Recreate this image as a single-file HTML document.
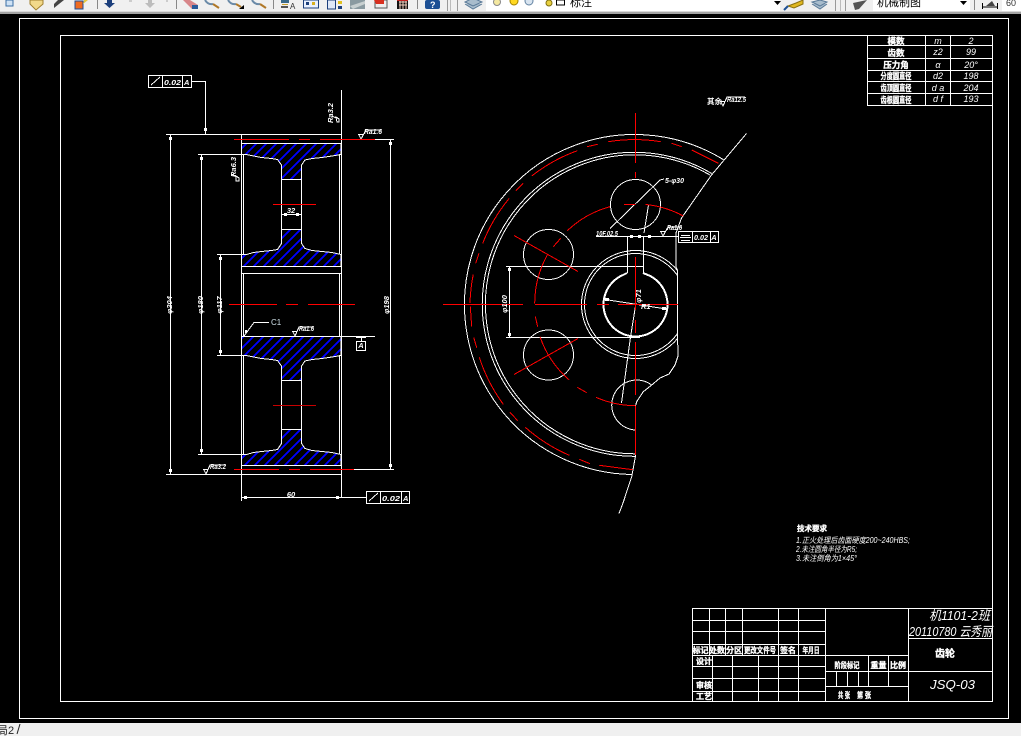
<!DOCTYPE html>
<html><head><meta charset="utf-8"><style>
html,body{margin:0;padding:0;width:1021px;height:736px;overflow:hidden;background:#000}
svg{display:block}
text{font-family:"Liberation Sans","Noto Sans CJK SC",sans-serif;fill:#fff}
.i{font-style:italic}
.c{text-anchor:middle}
.t{font-size:8.500px;font-weight:700;stroke:#fff;stroke-width:.35px}
.s{font-size:7.500px;font-weight:700}
.n{font-size:9px;font-style:italic}
</style></head><body>
<svg width="1021" height="736" viewBox="0 0 1021 736" xmlns="http://www.w3.org/2000/svg">
<defs>
<clipPath id="sec">
<path d="M241.500 143.500H341V154.500L332 156 322 157.500 312 158.500 305 160 301.500 165V179.500H281.500V165L277.500 159.500 271.500 158.500 261.500 157.500 253.500 156 246.500 154.500H241.500Z"/>
<path d="M241.500 266.500H341V254.500L332 252.500 322 251.500 312 250.500 305 248.500 301.500 243.500V229.500H281.500V243.500L277.500 249.500 271.500 250.500 261.500 251.500 253.500 252.500 246.500 254.500H241.500Z"/>
<path d="M241.500 336.500H341V355.500L332 357 322 358.500 312 359.500 305 361 301.500 366V380.500H281.500V366L277.500 360.500 271.500 359.500 261.500 358.500 253.500 357 246.500 355.500H241.500Z"/>
<path d="M241.500 465.500H341V454.500L332 452.500 322 451.500 312 450.500 305 448.500 301.500 443.500V429.500H281.500V443.500L277.500 449.500 271.500 450.500 261.500 451.500 253.500 452.500 246.500 454.500H241.500Z"/>
</clipPath>
<clipPath id="cl"><rect x="400" y="100" width="277" height="400"/></clipPath>
</defs>
<rect width="1021" height="736" fill="#000"/>
<!-- toolbar -->
<rect width="1021" height="11" fill="#f0f0f0"/>
<rect y="11" width="1021" height="1" fill="#d8d8d8"/>
<rect y="12" width="1021" height="2" fill="#a4a4a4"/>
<rect x="6" y="0" width="7" height="6" fill="#cfe2f5" stroke="#3a6ea5"/>
<path d="M30 0V4L36 10 43 4V0Z" fill="#f2d98a" stroke="#a08030"/>
<path d="M54 8L64 0H58L54 4Z" fill="#444"/>
<rect x="75" y="1" width="8" height="8" fill="#ee6a20" stroke="#1f4f9a"/>
<path d="M83 4L88 0H84Z" fill="#e8c840"/>
<rect x="97" y="0" width="1" height="9" fill="#888"/>
<path d="M107 0H112V3H115L109.500 8 104 3H107Z" fill="#1c3f7c"/>
<rect x="129" y="0" width="3" height="2" fill="#ccc"/>
<path d="M148 0H152V3H155L150 8 145 3H148Z" fill="#bdbdbd"/>
<rect x="166" y="0" width="2" height="2" fill="#ccc"/>
<rect x="176" y="0" width="1" height="9" fill="#888"/>
<path d="M183 0H190L198 5V9H192Z" fill="#d8868a"/><rect x="192" y="5" width="6" height="4" fill="#2a5a9a"/>
<path d="M205 0Q208 5 213 4" stroke="#6a8aa8" stroke-width="2" fill="none"/><path d="M213 4L219 8" stroke="#b07828" stroke-width="2"/>
<path d="M228 0Q231 5 236 4" stroke="#6a8aa8" stroke-width="2" fill="none"/><path d="M236 4L241 7" stroke="#b07828" stroke-width="2"/><path d="M239 9L244 9 244 5Z" fill="#000"/>
<path d="M252 0Q255 5 260 4" stroke="#6a8aa8" stroke-width="2" fill="none"/><path d="M260 4L266 8" stroke="#b07828" stroke-width="2"/>
<rect x="273" y="0" width="1" height="9" fill="#888"/>
<rect x="281" y="0" width="8" height="3" fill="#3a6a8a"/><rect x="282" y="4" width="6" height="1" fill="#c8a030"/><rect x="281" y="6" width="7" height="2" fill="#555"/>
<text x="290" y="9" style="font-size:8px;fill:#333">A</text>
<rect x="303.500" y="0" width="15" height="8" fill="#e8f0ff" stroke="#1c3f7c"/><rect x="306" y="2" width="3" height="3" fill="#1c3f7c"/><rect x="312" y="2" width="3" height="3" fill="#d8b020"/>
<rect x="327.500" y="0" width="8" height="9" fill="#dfe8f8" stroke="#1c3f7c"/><rect x="338" y="1" width="4" height="3" fill="#e0c020"/><rect x="338" y="6" width="4" height="3" fill="#1c3f7c"/>
<rect x="350" y="0" width="15" height="9" fill="#8a9aa0"/><path d="M350 6L365 1V4L353 9Z" fill="#c8d0d0"/>
<rect x="375" y="0" width="12" height="8" fill="#eee" stroke="#555"/><path d="M374 0H384V4H376Z" fill="#d83020"/>
<rect x="397" y="0" width="11" height="9" fill="#111"/><path d="M399 2H407M399 5H407M400 0V9M403 0V9M406 0V9" stroke="#f4d0c0" stroke-width="1"/><rect x="397" y="0" width="11" height="1" fill="#c02020"/>
<rect x="417" y="0" width="1" height="9" fill="#888"/>
<rect x="425" y="0" width="15" height="9" rx="2" fill="#1c4f94"/><text x="430" y="8" style="font-size:9px;font-weight:700;fill:#fff">?</text>
<rect x="447" y="0" width="1" height="11" fill="#999"/><rect x="450" y="0" width="1" height="11" fill="#bbb"/><rect x="457" y="0" width="1" height="11" fill="#999"/>
<path d="M465 2L473 6 482 2 473 -2ZM465 4L473 9 482 4" fill="#a8bccc" stroke="#5a7a98"/>
<rect x="486" y="0" width="294" height="11" fill="#fff"/>
<circle cx="497" cy="2" r="3.500" fill="#f4e8a0" stroke="#888"/>
<circle cx="514" cy="1" r="4" fill="#ffd820" stroke="#a08000"/>
<circle cx="529" cy="1" r="4" fill="#d8e4f0" stroke="#6080a0"/>
<circle cx="549" cy="3" r="3" fill="#e8d040" stroke="#807010"/>
<rect x="556.500" y="0" width="8" height="5" fill="#fff" stroke="#000"/>
<text x="570" y="6" style="font-size:11px;fill:#000">标注</text>
<path d="M774 1H781L777.500 5Z" fill="#000"/>
<path d="M788 6L796 3 803 0V4L794 8Z" fill="#e0b820" stroke="#8a7010"/><path d="M784 10L788 6" stroke="#1c4f94" stroke-width="2"/>
<path d="M812 2L820 6 827 2 820 0ZM812 4L820 9 827 4" fill="#a8bccc" stroke="#5a7a98"/>
<rect x="835" y="0" width="1" height="11" fill="#999"/><rect x="840" y="0" width="1" height="11" fill="#bbb"/><rect x="845" y="0" width="1" height="11" fill="#999"/>
<path d="M853 3L867 0 859 9 855 10Z" fill="#555"/>
<rect x="873" y="0" width="97" height="11" fill="#fff"/>
<text x="877" y="6" style="font-size:11px;fill:#000">机械制图</text>
<path d="M960 1H967L963.500 5Z" fill="#000"/>
<rect x="974" y="0" width="1" height="10" fill="#888"/>
<path d="M982.500 3V9M997.500 3V9M983 7H997" stroke="#000" fill="none"/><path d="M986 6L992 1 995 6Z" fill="#444"/>
<rect x="1002" y="0" width="19" height="11" fill="#fff"/>
<text x="1006" y="6" style="font-size:9px;fill:#333">60</text>
<!-- bottom bar -->
<rect y="723" width="1021" height="13" fill="#f0f0f0"/>
<text x="-3" y="734" style="font-size:11px;fill:#222">局2</text>
<path d="M20 724L17 734" stroke="#222" fill="none"/>

<g shape-rendering="crispEdges">
<!-- frames -->
<rect x="19.500" y="18.500" width="989" height="700" fill="none" stroke="#fff"/>
<rect x="60.500" y="35.500" width="932" height="666" fill="none" stroke="#fff"/>

<!-- left view: hatch lines -->
<g clip-path="url(#sec)">
<path stroke="#0000ff" stroke-width="1.600" fill="none" d="M241 149L341 49M241 159L341 59M241 169L341 69M241 179L341 79M241 189L341 89M241 199L341 99M241 209L341 109M241 219L341 119M241 229L341 129M241 239L341 139M241 249L341 149M241 259L341 159M241 269L341 169M241 279L341 179M241 289L341 189M241 299L341 199M241 309L341 209M241 319L341 219M241 329L341 229M241 339L341 239M241 349L341 249M241 359L341 259M241 369L341 269M241 379L341 279M241 389L341 289M241 399L341 299M241 409L341 309M241 419L341 319M241 429L341 329M241 439L341 339M241 449L341 349M241 459L341 359M241 469L341 369M241 479L341 379M241 489L341 389M241 499L341 399M241 509L341 409M241 519L341 419M241 529L341 429M241 539L341 439M241 549L341 449M241 559L341 459M241 569L341 469"/>
</g>
<g stroke="#fff" fill="none">
<path d="M241.500 143.500H341V154.500L332 156 322 157.500 312 158.500 305 160 301.500 165V179.500H281.500V165L277.500 159.500 271.500 158.500 261.500 157.500 253.500 156 246.500 154.500H241.500Z"/>
<path d="M241.500 266.500H341V254.500L332 252.500 322 251.500 312 250.500 305 248.500 301.500 243.500V229.500H281.500V243.500L277.500 249.500 271.500 250.500 261.500 251.500 253.500 252.500 246.500 254.500H241.500Z"/>
<path d="M241.500 336.500H341V355.500L332 357 322 358.500 312 359.500 305 361 301.500 366V380.500H281.500V366L277.500 360.500 271.500 359.500 261.500 358.500 253.500 357 246.500 355.500H241.500Z"/>
<path d="M241.500 465.500H341V454.500L332 452.500 322 451.500 312 450.500 305 448.500 301.500 443.500V429.500H281.500V443.500L277.500 449.500 271.500 450.500 261.500 451.500 253.500 452.500 246.500 454.500H241.500Z"/>
<path d="M281.500 179V230M301.500 179V230M281.500 380V430M301.500 380V430"/>
<path d="M241.500 134V501M341.500 90V497"/>
<path d="M243.500 154V254M339.500 154V254M243.500 273V336M339.500 273V336M243.500 355V454M339.500 355V454"/>
<path d="M166 134.500H341M241 273.500H341M166 474.500H341"/>
<path d="M170.500 134V474M201.500 154V454M220.500 254V355M390.500 139V469"/>
<path d="M198 154.500H241M217 254.500H241M358 139.500H394M341 336.500H375M198 454.500H241M217 355.500H241M354 469.500H394"/>
<path d="M241 497.500H366M281 214.500H302"/>
<rect x="148.500" y="75.500" width="43" height="12"/><path d="M162.500 75V87M182.500 75V87M151 85L160 77"/>
<path d="M192 81.500H205.500V134"/>
<rect x="366.500" y="491.500" width="43" height="12"/><path d="M380.500 491V503M401.500 491V503M369 501L378 493"/>
<path d="M244 336L254 322.500H269"/>
<path d="M356 337.500H366M361.500 337V341"/><rect x="356.500" y="341.500" width="9" height="9"/>
<!-- roughness -->
<path d="M358 134.500H364M359 135L361 139 366 130H382"/>
<path d="M292 331.500H297M293 332L295 336 299 327H314"/>
<path d="M203 469.500H208M204 470L206 474 210 465H226"/>
<path d="M660 231.500H665M661 232L663 236 668 227H682"/>
<path d="M720 101.500H725M721 102L723 106 727 97H745"/>
<path d="M336 117L339 119 339 122 337 122ZM332 116L336 118"/>
<path d="M236 176L239 178 239 181 236 181ZM231 174L236 176"/>
</g>
<g fill="#fff">
<rect x="169" y="137" width="3" height="3"/><rect x="200" y="157" width="3" height="3"/><rect x="219" y="257" width="3" height="3"/><rect x="389" y="142" width="3" height="3"/><rect x="204" y="128" width="3" height="3"/>
<rect x="169" y="469" width="3" height="3"/><rect x="200" y="449" width="3" height="3"/><rect x="219" y="350" width="3" height="3"/><rect x="389" y="464" width="3" height="3"/><rect x="244" y="496" width="3" height="3"/><rect x="336" y="496" width="3" height="3"/>
<rect x="284" y="213" width="3" height="3"/><rect x="296" y="213" width="3" height="3"/><rect x="245" y="330" width="2" height="3"/>
</g>
<g stroke="#ff0000" fill="none">
<path d="M234 139.500H289M299 139.500H310M320 139.500H375"/>
<path d="M273 204.500H316"/>
<path d="M229 304.500H277M286 304.500H298M308 304.500H355"/>
<path d="M273 405.500H316" stroke="#c80000"/>
<path d="M234 469.500H279M289 469.500H300M310 469.500H354"/>
</g>

<!-- right view -->
<g stroke="#fff" fill="none">
<path d="M724 160A170 170 0 1 0 632.700 474.500"/>
<path d="M711.700 173.500A152 152 0 1 0 635.500 456.300"/>
<path d="M710 175A149.500 149.500 0 1 0 635.500 453.800"/>
<path d="M746.500 133.500L711.500 175 681.500 218 676 233V267L677.500 270V333L678 356 675 365 669 374 660 378 651.700 385 643 392 636.700 401.700 635.500 406V456L631.700 476.700 623 503 619 513.500"/>
<circle cx="635.500" cy="204.500" r="25"/>
<circle cx="548.500" cy="254.500" r="25"/>
<circle cx="548.500" cy="355" r="25"/>
<path d="M651.700 385A25 25 0 1 0 635.500 430"/>
<g clip-path="url(#cl)"><circle cx="635.500" cy="304.500" r="54"/><circle cx="635.500" cy="304.500" r="51"/></g>
<path d="M627.500 236.500V273M643.500 236.500V273"/>
<path d="M596 236.500H678M506 266.500H643M506 337.500H640M509.500 266V337"/>
<rect x="678.500" y="231.500" width="40" height="11"/><path d="M692.500 231V242M710.500 231V242"/>
<path d="M681 235.500H690M680 237.500H691M681 240.500H690"/>
<path d="M610 228.500L660 180 664 179"/>
<path d="M648.500 205L644 233"/>
<path d="M605 299.500L666.500 309M636 303L630.500 337 621.500 403"/>
</g>
<g stroke="#fff" fill="none" stroke-width="2">
<path d="M627 273L623 275A32 32 0 1 0 648 275L643 273"/>
</g>
<g fill="#fff"><rect x="630" y="235" width="3" height="3"/><rect x="638" y="235" width="3" height="3"/><rect x="648" y="235" width="3" height="3"/><rect x="508" y="268" width="3" height="3"/><rect x="508" y="333" width="3" height="3"/><rect x="605" y="298" width="4" height="3"/><rect x="662" y="307" width="4" height="3"/></g>
<g stroke="#ff0000" fill="none">
<path d="M443 304.500H523M535 304.500H587M597 304.500H609M618 304.500H678"/>
<path d="M635.500 113V163M635.500 172V178M635.500 257V310M635.500 320V333M635.500 342V395M635.500 406V455"/>
<path d="M624 204.500H635.500"/>
<path d="M514 235.500L578 271.500M514 374.500L578 338.500"/>
<path d="M683.300 216A100 100 0 0 0 645.700 204.500M610 206.700A100 100 0 0 0 567.300 230.700M560.700 238.300L553.300 246.700M547.300 255A100 100 0 0 0 534.700 303.300M535.300 316.700L537.700 326.700M540 336.700A100 100 0 0 0 569.300 380M577.300 387.300L586.700 392.700M596 397.300A100 100 0 0 0 635.300 405.700"/>
<path d="M718.300 163.300L691.700 150M681.700 146.700L671.700 143.300M660.700 141.700A165 165 0 0 0 608.300 141.700M597.700 144.300L587 146.700M577.300 150.700A165 165 0 0 0 531.700 176M523.300 183.300L516 190.700M509.300 198.300A165 165 0 0 0 482.700 243.300M479 253.300L475.700 263.300M473.300 274.300A165 165 0 0 0 470 303M470.300 306.700L471.700 326.700M473.700 337.300L476.700 347.700M479.300 357.300A165 165 0 0 0 503.300 404.300M510 412.300L517.700 420.700M525.300 427.300A165 165 0 0 0 569.300 455.300M579.300 459.300L590 463.700M599.300 465.300L632.700 469.700"/>
</g>

<!-- parameter table -->
<g stroke="#fff" fill="none">
<rect x="867.500" y="35.500" width="125" height="70"/>
<path d="M925.500 35V105M950.500 35V105M867 45.500H992M867 58.500H992M867 70.500H992M867 81.500H992M867 93.500H992"/>
<!-- title block -->
<rect x="692.500" y="608.500" width="300" height="93"/>
<path d="M692 620.500H825M692 631.500H825M692 644.500H825M692 655.500H908M692 666.500H825M692 678.500H825M692 691.500H825"/>
<path d="M709.500 608V655M725.500 608V655M742.500 608V655M778.500 608V701M798.500 608V701M825.500 608V701"/>
<path d="M712.500 655V701M732.500 655V701M758.500 655V701"/>
<path d="M908.500 608V701M908 638.500H992M825 671.500H992M825 686.500H908"/>
<path d="M868.500 655V686M888.500 655V686M836.500 671V686M847.500 671V686M858.500 671V686"/>
</g>
</g>

<!-- left view text -->
<text x="164" y="85" class="s i" textLength="17" lengthAdjust="spacingAndGlyphs">0.02</text><text x="184" y="85" class="s i">A</text>
<text x="382" y="501" class="s i" textLength="18" lengthAdjust="spacingAndGlyphs">0.02</text><text x="403" y="501" class="s i">A</text>
<text x="271" y="325" style="font-size:8px;fill:#cfe0e8">C1</text>
<text x="291" y="213" class="s i c">32</text>
<text x="291" y="497" class="s i c">60</text>
<text x="364" y="134" class="s i" textLength="18" lengthAdjust="spacingAndGlyphs">Ra1.6</text>
<text x="299" y="331" class="s i" textLength="15" lengthAdjust="spacingAndGlyphs">Ra1.6</text>
<text x="210" y="469" class="s i" textLength="16" lengthAdjust="spacingAndGlyphs">Ra3.2</text>
<text transform="translate(333,113) rotate(-90)" class="s i c">Ra3.2</text>
<text transform="translate(236,167) rotate(-90)" class="s i c">Ra6.3</text>
<text transform="translate(172,305) rotate(-90)" class="s i c">φ204</text>
<text transform="translate(203,305) rotate(-90)" class="s i c">φ180</text>
<text transform="translate(222,305) rotate(-90)" class="s i c">φ117</text>
<text transform="translate(389,305) rotate(-90)" class="s i c">φ198</text>
<text x="361" y="348" class="s i c">A</text>

<!-- right view text -->
<text x="707" y="104" class="s">其余</text>
<text x="727" y="102" class="s i" textLength="19" lengthAdjust="spacingAndGlyphs">Ra12.5</text>
<text x="665" y="183" class="s i" textLength="19" lengthAdjust="spacingAndGlyphs">5-φ30</text>
<text x="596" y="236" class="s i" textLength="22" lengthAdjust="spacingAndGlyphs">10F.02.5</text>
<text x="667" y="230" class="s i" textLength="15" lengthAdjust="spacingAndGlyphs">Ra1.6</text>
<text x="694" y="240" class="s i" textLength="14" lengthAdjust="spacingAndGlyphs">0.02</text>
<text x="714" y="240" class="s i c">A</text>
<text transform="translate(507,304) rotate(-90)" class="s i c">φ100</text>
<text transform="translate(641,296) rotate(-90)" class="s i c">φ71</text>
<text x="641" y="309" class="s i">R1</text>

<!-- table text -->
<text x="896" y="44" class="t c">模数</text><text x="938" y="44" class="n c">m</text><text x="971" y="44" class="n c">2</text>
<text x="896" y="56" class="t c">齿数</text><text x="938" y="55" class="n c">z2</text><text x="971" y="55" class="n c">99</text>
<text x="896" y="68" class="t c">压力角</text><text x="938" y="68" class="n c">α</text><text x="971" y="68" class="n c">20°</text>
<text x="896" y="79" class="t c" textLength="31" lengthAdjust="spacingAndGlyphs">分度圆直径</text><text x="938" y="79" class="n c">d2</text><text x="971" y="79" class="n c">198</text>
<text x="896" y="91" class="t c" textLength="31" lengthAdjust="spacingAndGlyphs">齿顶圆直径</text><text x="938" y="91" class="n c">d a</text><text x="971" y="91" class="n c">204</text>
<text x="896" y="103" class="t c" textLength="31" lengthAdjust="spacingAndGlyphs">齿根圆直径</text><text x="938" y="102" class="n c">d f</text><text x="971" y="102" class="n c">193</text>

<!-- tech -->
<text x="797" y="531" class="t" style="font-size:7.500px">技术要求</text>
<text x="796" y="543" style="font-size:8px" class="i" textLength="114" lengthAdjust="spacingAndGlyphs">1.正火处理后齿面硬度200~240HBS;</text>
<text x="796" y="552" style="font-size:8px" class="i" textLength="61" lengthAdjust="spacingAndGlyphs">2.未注圆角半径为R5;</text>
<text x="796" y="561" style="font-size:8px" class="i" textLength="61" lengthAdjust="spacingAndGlyphs">3.未注倒角为1×45°</text>

<!-- title text -->
<text x="929" y="620" class="i" style="font-size:13px" textLength="61" lengthAdjust="spacingAndGlyphs">机1101-2班</text>
<text x="909" y="636" class="i" style="font-size:13px" textLength="83" lengthAdjust="spacingAndGlyphs">20110780 云秀丽</text>
<text x="945" y="657" class="c t" style="font-size:10px">齿轮</text>
<text x="930" y="689" class="i" style="font-size:13px" textLength="45" lengthAdjust="spacingAndGlyphs">JSQ-03</text>
<g class="t" style="font-size:8px">
<text x="700.500" y="653" class="c">标记</text>
<text x="717" y="653" class="c">处数</text>
<text x="734" y="653" class="c">分区</text>
<text x="760" y="653" class="c" textLength="32" lengthAdjust="spacingAndGlyphs">更改文件号</text>
<text x="788" y="653" class="c">签名</text>
<text x="811" y="653" class="c" textLength="17" lengthAdjust="spacingAndGlyphs">年月日</text>
<text x="696" y="664">设计</text>
<text x="847" y="668" class="c" textLength="25" lengthAdjust="spacingAndGlyphs">阶段标记</text>
<text x="878.500" y="668" class="c">重量</text>
<text x="898" y="668" class="c">比例</text>
<text x="838" y="698" textLength="12" lengthAdjust="spacingAndGlyphs">共 张</text>
<text x="857" y="698" textLength="14" lengthAdjust="spacingAndGlyphs">第 张</text>
<text x="696" y="688">审核</text>
<text x="696" y="699">工艺</text>
</g>
</svg>
</body></html>
